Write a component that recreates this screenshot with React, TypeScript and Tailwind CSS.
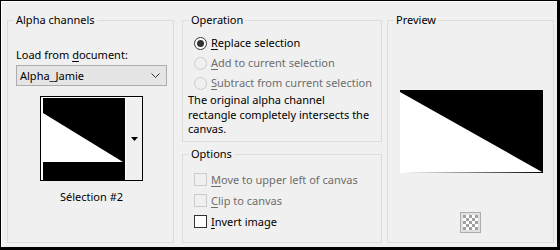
import React from "react";

const font = { fontFamily: '"Segoe UI", "Noto Sans", sans-serif' };

function Mn({ children }: { children: React.ReactNode }) {
  return <span className="underline underline-offset-[2px] decoration-1">{children}</span>;
}

function Radio({ checked, disabled }: { checked?: boolean; disabled?: boolean }) {
  return (
    <span
      className={`flex h-[13px] w-[13px] shrink-0 items-center justify-center rounded-full border ${
        disabled ? "border-[#cccccc] bg-[#f0f0f0]" : "border-[#333333] bg-white"
      }`}
    >
      {checked ? <span className="h-[7px] w-[7px] rounded-full bg-[#333333]" /> : null}
    </span>
  );
}

function Check({ disabled }: { disabled?: boolean }) {
  return (
    <span
      className={`block h-[13px] w-[13px] shrink-0 border ${
        disabled ? "border-[#cccccc] bg-[#f0f0f0]" : "border-[#333333] bg-white"
      }`}
    />
  );
}

export default function App() {
  return (
    <div className="h-[250px] w-[560px] bg-black pb-[3px] pl-[1px] pr-[3px] pt-[1px]" style={font}>
      <div className="flex h-full w-full items-start border-l border-t border-white bg-[#f0f0f0] pl-[5px] pt-[10px] text-[11px] leading-[16px] text-black">
        {/* Alpha channels */}
        <fieldset className="h-[231px] w-[167px] shrink-0 border border-[#dcdcdc]">
          <legend className="ml-[6px] px-[2px] leading-[16px]">Alpha channels</legend>
          <div className="flex flex-col pl-[8px]">
            <div className="mt-[19px]">
              Load from <Mn>d</Mn>ocument:
            </div>
            <div className="mt-[2px] flex h-[21px] w-[151px] items-center justify-between border border-[#adadad] bg-[#e5e5e5] pl-[3px] pr-[6px]">
              <span>Alpha_Jamie</span>
              <svg width="9" height="5" viewBox="0 0 9 5">
                <polyline points="0.5,0.5 4.5,4.5 8.5,0.5" fill="none" stroke="#333" strokeWidth="1" />
              </svg>
            </div>
            <div className="ml-[24px] mt-[10px] flex w-[103px] flex-col items-center">
              <div className="flex h-[85px] w-[103px] border border-black bg-white pl-[2px] pt-[1px]">
                <svg width="82" height="82" viewBox="0 0 82 82" className="shrink-0">
                  <rect width="82" height="82" fill="#000" />
                  <polygon points="0,15 80,64 0,64" fill="#fff" />
                </svg>
                <div className="flex flex-1 items-center justify-center border-l border-white bg-[#f0f0f0]">
                  <svg width="7" height="4" viewBox="0 0 7 4">
                    <polygon points="0,0 7,0 3.5,4" fill="#000" />
                  </svg>
                </div>
              </div>
              <div className="mt-[8px]">Sélection #2</div>
            </div>
          </div>
        </fieldset>

        {/* Operation + Options */}
        <div className="ml-[8px] flex w-[200px] shrink-0 flex-col">
          <fieldset className="h-[130px] border border-[#dcdcdc]">
            <legend className="ml-[6px] px-[2px] leading-[16px]">Operation</legend>
            <div className="mt-[5px] flex flex-col">
              <div className="flex h-[20px] items-center gap-[4px] pl-[11px]">
                <Radio checked />
                <span>
                  <Mn>R</Mn>eplace selection
                </span>
              </div>
              <div className="flex h-[20px] items-center gap-[4px] pl-[11px] text-[#6d6d6d]">
                <Radio disabled />
                <span>
                  <Mn>A</Mn>dd to current selection
                </span>
              </div>
              <div className="flex h-[20px] items-center gap-[4px] pl-[11px] text-[#6d6d6d]">
                <Radio disabled />
                <span className="whitespace-nowrap">
                  <Mn>S</Mn>ubtract from current selection
                </span>
              </div>
              <p className="whitespace-nowrap pl-[5px] leading-[14.5px]">
                The original alpha channel
                <br />
                rectangle completely intersects the
                <br />
                canvas.
              </p>
            </div>
          </fieldset>
          <fieldset className="mt-[4px] h-[97px] border border-[#dcdcdc]">
            <legend className="ml-[6px] px-[2px] leading-[16px]">Options</legend>
            <div className="mt-[7px] flex flex-col">
              <div className="flex h-[21px] items-center gap-[4px] pl-[11px] text-[#6d6d6d]">
                <Check disabled />
                <span>
                  <Mn>M</Mn>ove to upper left of canvas
                </span>
              </div>
              <div className="flex h-[21px] items-center gap-[4px] pl-[11px] text-[#6d6d6d]">
                <Check disabled />
                <span>
                  <Mn>C</Mn>lip to canvas
                </span>
              </div>
              <div className="flex h-[21px] items-center gap-[4px] pl-[11px]">
                <Check />
                <span>
                  <Mn>I</Mn>nvert image
                </span>
              </div>
            </div>
          </fieldset>
        </div>

        {/* Preview */}
        <fieldset className="ml-[5px] h-[231px] w-[167px] shrink-0 border border-[#dcdcdc]">
          <legend className="ml-[6px] px-[2px] leading-[16px]">Preview</legend>
          <div className="flex flex-col items-start pl-[12px]">
            <svg width="143" height="83" viewBox="0 0 143 83" className="mt-[62px]">
              <rect width="143" height="83" fill="#000" />
              <polygon points="0,2 142,82 0,83" fill="#fff" />
            </svg>
            <div className="ml-[60px] mt-[39px] flex h-[21px] w-[21px] items-center justify-center border border-[#adadad] bg-[#e1e1e1]">
              <svg width="15" height="15" viewBox="0 0 15 15">
                <rect width="15" height="15" fill="#ffffff" />
                <rect x="0" y="0" width="3" height="3" fill="#a0a0a0" />
                <rect x="6" y="0" width="3" height="3" fill="#a0a0a0" />
                <rect x="12" y="0" width="3" height="3" fill="#a0a0a0" />
                <rect x="3" y="3" width="3" height="3" fill="#a0a0a0" />
                <rect x="9" y="3" width="3" height="3" fill="#a0a0a0" />
                <rect x="0" y="6" width="3" height="3" fill="#a0a0a0" />
                <rect x="6" y="6" width="3" height="3" fill="#a0a0a0" />
                <rect x="12" y="6" width="3" height="3" fill="#a0a0a0" />
                <rect x="3" y="9" width="3" height="3" fill="#a0a0a0" />
                <rect x="9" y="9" width="3" height="3" fill="#a0a0a0" />
                <rect x="0" y="12" width="3" height="3" fill="#a0a0a0" />
                <rect x="6" y="12" width="3" height="3" fill="#a0a0a0" />
                <rect x="12" y="12" width="3" height="3" fill="#a0a0a0" />
              </svg>
            </div>
          </div>
        </fieldset>
      </div>
    </div>
  );
}
